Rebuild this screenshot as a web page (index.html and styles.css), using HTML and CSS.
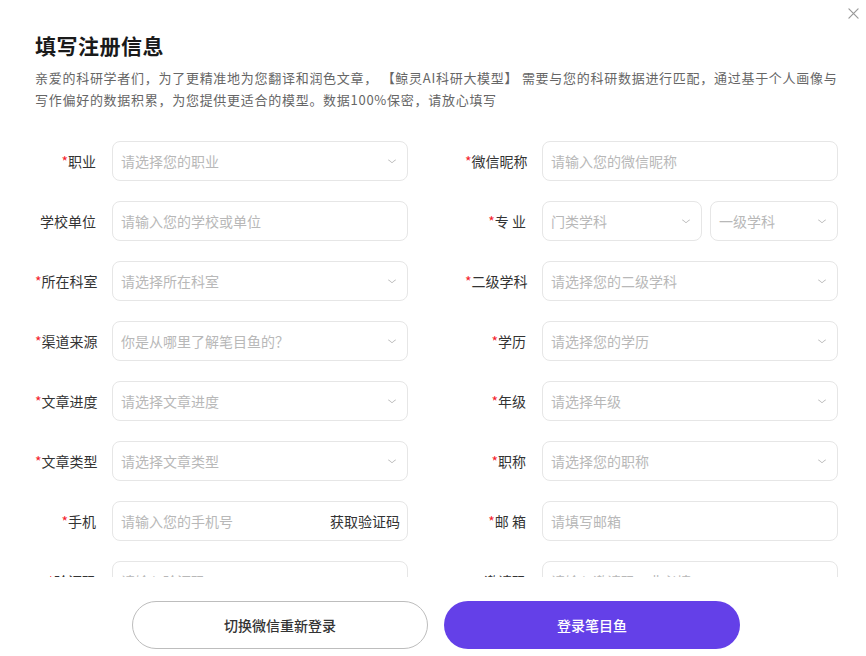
FILE: index.html
```html
<!DOCTYPE html>
<html lang="zh-CN">
<head>
    <meta charset="UTF-8">
    <meta name="viewport" content="width=device-width, initial-scale=1.0">
    <title>填写注册信息</title>
    <link rel="stylesheet" href="styles.css">
</head>
<body>
    <div class="dialog">
        <button class="close-btn" aria-label="关闭">
            <svg viewBox="0 0 12 12" width="11" height="11" fill="none" stroke="#999" stroke-width="1.3" stroke-linecap="round">
                <path d="M1 1L11 11M11 1L1 11"/>
            </svg>
        </button>

        <div class="dialog-header">
            <h2>填写注册信息</h2>
            <p class="intro">亲爱的科研学者们，为了更精准地为您翻译和润色文章， 【鲸灵AI科研大模型】 需要与您的科研数据进行匹配，通过基于个人画像与写作偏好的数据积累，为您提供更适合的模型。数据100%保密，请放心填写</p>
        </div>

        <div class="form-scroll">
            <form class="reg-form">
                <div class="form-item">
                    <label><span class="req">*</span>职业</label>
                    <div class="field select"><span class="ph">请选择您的职业</span><i class="arrow"></i></div>
                </div>
                <div class="form-item">
                    <label><span class="req">*</span>微信昵称</label>
                    <div class="field"><span class="ph">请输入您的微信昵称</span></div>
                </div>

                <div class="form-item">
                    <label>学校单位</label>
                    <div class="field"><span class="ph">请输入您的学校或单位</span></div>
                </div>
                <div class="form-item">
                    <label><span class="req">*</span>专&nbsp;业</label>
                    <div class="field-pair">
                        <div class="field select wide"><span class="ph">门类学科</span><i class="arrow"></i></div>
                        <div class="field select"><span class="ph">一级学科</span><i class="arrow"></i></div>
                    </div>
                </div>

                <div class="form-item">
                    <label><span class="req">*</span>所在科室</label>
                    <div class="field select"><span class="ph">请选择所在科室</span><i class="arrow"></i></div>
                </div>
                <div class="form-item">
                    <label><span class="req">*</span>二级学科</label>
                    <div class="field select"><span class="ph">请选择您的二级学科</span><i class="arrow"></i></div>
                </div>

                <div class="form-item">
                    <label><span class="req">*</span>渠道来源</label>
                    <div class="field select"><span class="ph">你是从哪里了解笔目鱼的？</span><i class="arrow"></i></div>
                </div>
                <div class="form-item">
                    <label><span class="req">*</span>学历</label>
                    <div class="field select"><span class="ph">请选择您的学历</span><i class="arrow"></i></div>
                </div>

                <div class="form-item">
                    <label><span class="req">*</span>文章进度</label>
                    <div class="field select"><span class="ph">请选择文章进度</span><i class="arrow"></i></div>
                </div>
                <div class="form-item">
                    <label><span class="req">*</span>年级</label>
                    <div class="field select"><span class="ph">请选择年级</span><i class="arrow"></i></div>
                </div>

                <div class="form-item">
                    <label><span class="req">*</span>文章类型</label>
                    <div class="field select"><span class="ph">请选择文章类型</span><i class="arrow"></i></div>
                </div>
                <div class="form-item">
                    <label><span class="req">*</span>职称</label>
                    <div class="field select"><span class="ph">请选择您的职称</span><i class="arrow"></i></div>
                </div>

                <div class="form-item">
                    <label><span class="req">*</span>手机</label>
                    <div class="field"><span class="ph">请输入您的手机号</span><span class="code-btn">获取验证码</span></div>
                </div>
                <div class="form-item">
                    <label><span class="req">*</span>邮&nbsp;箱</label>
                    <div class="field"><span class="ph">请填写邮箱</span></div>
                </div>

                <div class="form-item">
                    <label><span class="req">*</span>验证码</label>
                    <div class="field"><span class="ph">请输入验证码</span></div>
                </div>
                <div class="form-item">
                    <label>邀请码</label>
                    <div class="field"><span class="ph">请输入邀请码，非必填</span></div>
                </div>
            </form>
        </div>

        <div class="dialog-footer">
            <button class="btn btn-ghost">切换微信重新登录</button>
            <button class="btn btn-primary">登录笔目鱼</button>
        </div>
    </div>
</body>
</html>
```

FILE: styles.css
```css
* {
    margin: 0;
    padding: 0;
    box-sizing: border-box;
}

body {
    font-family: "Noto Sans CJK SC", "Noto Sans", sans-serif;
    background: #fff;
    color: #333;
    width: 866px;
    height: 656px;
    overflow: hidden;
}

.dialog {
    position: relative;
    height: 656px;
    display: flex;
    flex-direction: column;
}

.close-btn {
    position: absolute;
    top: 3px;
    right: 3px;
    width: 20px;
    height: 20px;
    border: none;
    background: transparent;
    display: flex;
    align-items: center;
    justify-content: center;
    cursor: pointer;
}

.dialog-header {
    padding: 30px 28px 0 35px;
}

h2 {
    font-size: 21px;
    line-height: 30px;
    font-weight: 700;
    color: #1a1a1a;
    letter-spacing: 0.5px;
}

.intro {
    margin-top: 7px;
    font-size: 13px;
    line-height: 22px;
    color: #666;
    letter-spacing: 0.72px;
}

/* scrolling form area */
.form-scroll {
    height: 466px;
    overflow: hidden;
    padding: 30px 0 0 35px;
}

.reg-form {
    display: grid;
    grid-template-columns: 373px 373px;
    column-gap: 57px;
    row-gap: 20px;
}

.form-item {
    display: flex;
    align-items: center;
    gap: 16px;
}

.form-item label {
    width: 61px;
    flex-shrink: 0;
    text-align: right;
    font-size: 14px;
    color: #333;
    white-space: nowrap;
}

.req {
    color: #f5222d;
}

.field {
    flex: 1;
    height: 40px;
    border: 1px solid #e6e6e6;
    border-radius: 8px;
    display: flex;
    align-items: center;
    padding: 0 8px 0 8px;
    font-size: 14px;
}

.ph {
    flex: 1;
    color: #b8b8b8;
    white-space: nowrap;
}

.arrow {
    width: 8px;
    height: 8px;
    margin-right: 3px;
    border-right: 1.5px solid #aaa;
    border-bottom: 1.5px solid #aaa;
    transform: scale(0.7, 0.55) rotate(45deg);
    margin-top: -3px;
}

.field-pair {
    flex: 1;
    display: flex;
    gap: 8px;
}

.field-pair .field {
    flex: 0 0 128px;
}

.field-pair .field.wide {
    flex: 0 0 160px;
}

.code-btn {
    color: #333;
    font-size: 14px;
    margin-right: -1px;
}

/* footer buttons */
.dialog-footer {
    padding-top: 24px;
    display: flex;
    gap: 16px;
    padding-left: 132px;
}

.btn {
    width: 296px;
    height: 48px;
    border-radius: 24px;
    font-family: inherit;
    font-size: 14px;
    font-weight: 500;
    cursor: pointer;
}

.btn-ghost {
    background: #fff;
    border: 1px solid #bdbdbd;
    color: #333;
}

.btn-primary {
    background: #6440e8;
    border: none;
    color: #fff;
}
```
